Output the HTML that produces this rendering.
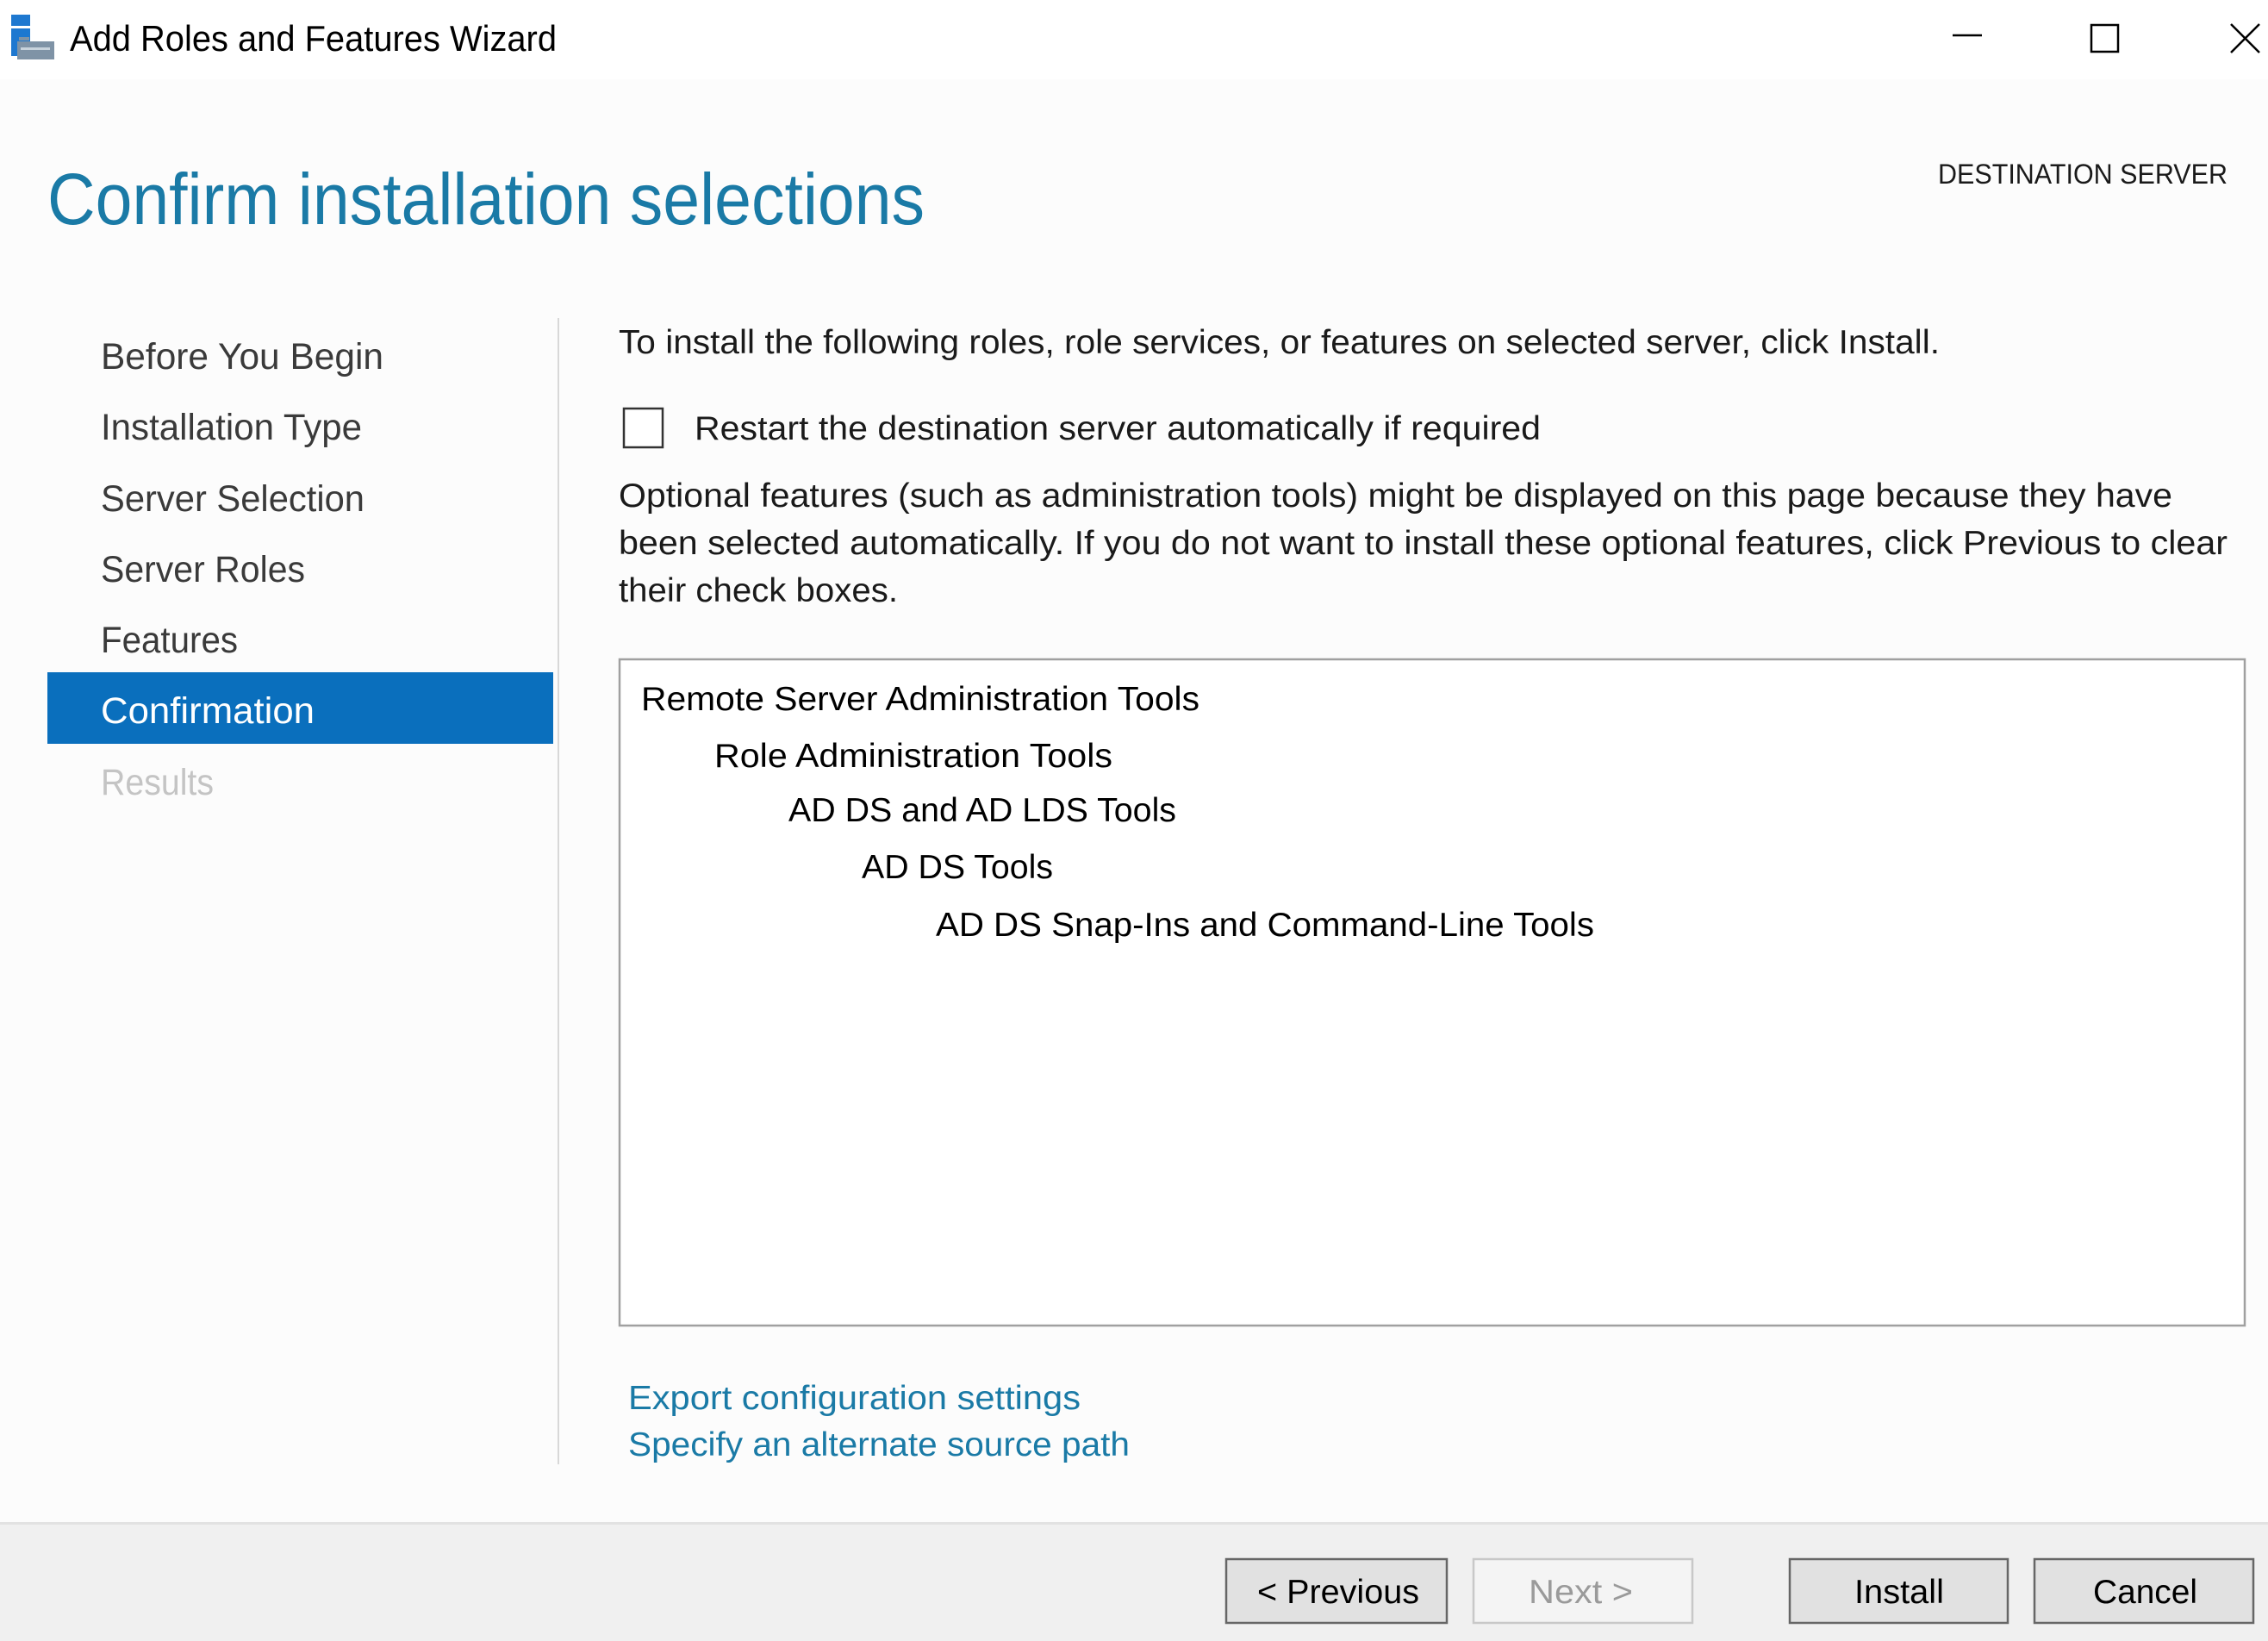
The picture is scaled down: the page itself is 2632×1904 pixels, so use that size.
<!DOCTYPE html>
<html><head><meta charset="utf-8"><style>
html,body{margin:0;padding:0;width:2632px;height:1904px;overflow:hidden;background:#fcfcfc}
svg{display:block}
text{font-family:"Liberation Sans",sans-serif}
</style></head><body>
<svg width="2632" height="1904" viewBox="0 0 2632 1904" xmlns="http://www.w3.org/2000/svg">
<rect x="0" y="0" width="2632" height="1904" fill="#fcfcfc"/>
<rect x="0" y="0" width="2632" height="92" fill="#ffffff"/>
<!-- app icon -->
<rect x="13" y="17" width="22" height="13" fill="#1e78d0"/>
<rect x="13" y="33" width="22" height="32" fill="#1e78d0"/>
<rect x="22" y="43" width="12" height="4" fill="#7f93a6"/>
<rect x="20" y="48" width="43" height="21" fill="#7f93a6"/>
<rect x="24" y="55" width="34" height="3" fill="#c8d3dc"/>
<text x="81" y="59" font-size="42" fill="#000" textLength="565" lengthAdjust="spacingAndGlyphs">Add Roles and Features Wizard</text>
<!-- window controls -->
<line x1="2266" y1="41" x2="2300" y2="41" stroke="#000" stroke-width="2.5"/>
<rect x="2427" y="29" width="31" height="31" fill="none" stroke="#000" stroke-width="2.5"/>
<path d="M2589 28 L2622 61 M2622 28 L2589 61" stroke="#000" stroke-width="2.5"/>
<!-- heading -->
<text x="55" y="260" font-size="84" fill="#1a7aa6" textLength="1018" lengthAdjust="spacingAndGlyphs">Confirm installation selections</text>
<text x="2249" y="213" font-size="32" fill="#1a1a1a" textLength="336" lengthAdjust="spacingAndGlyphs">DESTINATION SERVER</text>
<!-- nav -->
<rect x="55" y="780" width="587" height="83" fill="#0a6fbd"/>
<g font-size="43" fill="#3a3a3a">
<text x="117" y="428" textLength="328" lengthAdjust="spacingAndGlyphs">Before You Begin</text>
<text x="117" y="510" textLength="303" lengthAdjust="spacingAndGlyphs">Installation Type</text>
<text x="117" y="593" textLength="306" lengthAdjust="spacingAndGlyphs">Server Selection</text>
<text x="117" y="675" textLength="237" lengthAdjust="spacingAndGlyphs">Server Roles</text>
<text x="117" y="757" textLength="159" lengthAdjust="spacingAndGlyphs">Features</text>
<text x="117" y="839" fill="#ffffff" textLength="248" lengthAdjust="spacingAndGlyphs">Confirmation</text>
<text x="117" y="922" fill="#c4c4c4" textLength="131" lengthAdjust="spacingAndGlyphs">Results</text>
</g>
<rect x="647" y="369" width="2" height="1330" fill="#d8d8d8"/>
<!-- content -->
<g font-size="39" fill="#1a1a1a">
<text x="718" y="410" textLength="1533" lengthAdjust="spacingAndGlyphs">To install the following roles, role services, or features on selected server, click Install.</text>
<text x="806" y="510" textLength="982" lengthAdjust="spacingAndGlyphs">Restart the destination server automatically if required</text>
<text x="718" y="588" textLength="1803" lengthAdjust="spacingAndGlyphs">Optional features (such as administration tools) might be displayed on this page because they have</text>
<text x="718" y="643" textLength="1867" lengthAdjust="spacingAndGlyphs">been selected automatically. If you do not want to install these optional features, click Previous to clear</text>
<text x="718" y="698" textLength="324" lengthAdjust="spacingAndGlyphs">their check boxes.</text>
</g>
<rect x="724" y="474" width="45" height="45" fill="#fff" stroke="#333" stroke-width="2.5"/>
<rect x="719" y="765" width="1886" height="773" fill="#ffffff" stroke="#a0a0a0" stroke-width="2.5"/>
<g font-size="39" fill="#000">
<text x="744" y="824" textLength="648" lengthAdjust="spacingAndGlyphs">Remote Server Administration Tools</text>
<text x="829" y="890" textLength="462" lengthAdjust="spacingAndGlyphs">Role Administration Tools</text>
<text x="915" y="953" textLength="450" lengthAdjust="spacingAndGlyphs">AD DS and AD LDS Tools</text>
<text x="1000" y="1019" textLength="222" lengthAdjust="spacingAndGlyphs">AD DS Tools</text>
<text x="1086" y="1086" textLength="764" lengthAdjust="spacingAndGlyphs">AD DS Snap-Ins and Command-Line Tools</text>
</g>
<g font-size="39" fill="#1a7aa6">
<text x="729" y="1635" textLength="525" lengthAdjust="spacingAndGlyphs">Export configuration settings</text>
<text x="729" y="1689" textLength="582" lengthAdjust="spacingAndGlyphs">Specify an alternate source path</text>
</g>
<!-- footer -->
<rect x="0" y="1767" width="2632" height="137" fill="#f0f0f0"/>
<rect x="0" y="1766" width="2632" height="3" fill="#e2e2e2"/>
<rect x="1423" y="1809" width="256" height="74" fill="#e1e1e1" stroke="#666" stroke-width="2.5"/>
<rect x="1710" y="1809" width="254" height="74" fill="#f4f4f4" stroke="#c8c8c8" stroke-width="2.5"/>
<rect x="2077" y="1809" width="253" height="74" fill="#e1e1e1" stroke="#666" stroke-width="2.5"/>
<rect x="2361" y="1809" width="254" height="74" fill="#e1e1e1" stroke="#666" stroke-width="2.5"/>
<g font-size="39">
<text x="1459" y="1860" fill="#000" textLength="188" lengthAdjust="spacingAndGlyphs">&lt; Previous</text>
<text x="1774" y="1860" fill="#9a9a9a" textLength="121" lengthAdjust="spacingAndGlyphs">Next &gt;</text>
<text x="2152" y="1860" fill="#000" textLength="104" lengthAdjust="spacingAndGlyphs">Install</text>
<text x="2429" y="1860" fill="#000" textLength="121" lengthAdjust="spacingAndGlyphs">Cancel</text>
</g>
</svg>
</body></html>
